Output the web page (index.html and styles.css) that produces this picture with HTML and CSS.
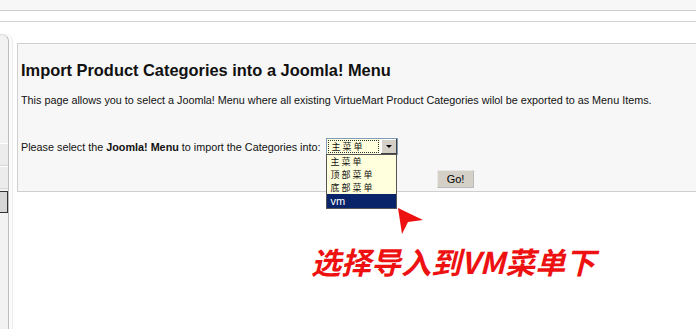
FILE: index.html
```html
<!DOCTYPE html>
<html>
<head>
    <title>Import Product Categories</title>
    <link rel="stylesheet" href="styles.css">
</head>
<body>
    <div class="topbar"></div>
    <div class="subbar"></div>

    <div class="layout">
        <div class="sidebar">
            <div class="side-gap"></div>
            <div class="side-item"></div>
            <div class="side-item"></div>
            <div class="side-item active"></div>
        </div>

        <div class="main">
            <div class="panel">
                <h1>Import Product Categories into a Joomla! Menu</h1>
                <p>This page allows you to select a Joomla! Menu where all existing VirtueMart Product Categories wilol be exported to as Menu Items.</p>

                <div class="select-row">
                    <span>Please select the <b>Joomla! Menu</b> to import the Categories into:</span>
                    <div class="fake-select">
                        <span class="fake-value">主菜单</span>
                        <span class="fake-btn"><span class="caret"></span></span>
                        <ul class="fake-list">
                            <li>主菜单</li>
                            <li>顶部菜单</li>
                            <li>底部菜单</li>
                            <li class="picked">vm</li>
                        </ul>
                    </div>
                </div>

                <div class="go-row">
                    <input type="button" class="go" value="Go!">
                </div>
            </div>

            <div class="note">选择导入到VM菜单下</div>
        </div>
    </div>

    <svg class="pointer" width="40" height="40" viewBox="0 0 40 40">
        <path d="M2 2 L27 14 L12 16 L6 28 Z" fill="#ee1111"/>
    </svg>
</body>
</html>
```

FILE: styles.css
```css
body {
    margin: 0;
    padding: 0;
    background: #fff;
    font-family: "Liberation Sans", Arial, sans-serif;
    font-size: 10.8px;
    color: #111;
    overflow: hidden;
    position: relative;
    height: 329px;
}

.topbar {
    height: 10px;
    background: #f7f7f7;
    border-bottom: 1px solid #cfcfcf;
}

.subbar {
    height: 10px;
    background: #fff;
    border-bottom: 1px solid #d4d4d4;
}

.layout {
    display: flex;
}

.sidebar {
    width: 8px;
    margin-top: 12px;
    height: 300px;
    background: #f2f2f2;
    border-right: 1px solid #bdbdbd;
    border-top: 1px solid #dcdcdc;
    border-top-right-radius: 7px;
    box-shadow: 3px 0 0 #fbfbfb, 4px 0 0 #ececec;
}

.side-gap {
    height: 108px;
}

.side-item {
    height: 21px;
    border-bottom: 1px solid #d8d8d8;
    border-top: 1px solid #fff;
    background: #ececec;
}

.side-item.active {
    margin-top: 2px;
    height: 20px;
    border: 1px solid #333;
    border-left: none;
    background: #d6d6d6;
}

.main {
    flex: 1;
    padding: 21px 0 0 8px;
}

.panel {
    background: #f7f7f7;
    border: 1px solid #cfcfcf;
    border-right: none;
    height: 147px;
    padding: 0 0 0 3px;
}

.panel h1 {
    margin: 17px 0 0;
    font-size: 16.4px;
    font-weight: bold;
    color: #111;
}

.panel p {
    margin: 14px 0 0;
}

.select-row {
    display: flex;
    align-items: center;
    margin-top: 32px;
}

.select-row b {
    font-weight: bold;
}

.fake-select {
    position: relative;
    display: flex;
    margin-left: 6px;
    height: 15px;
    width: 70px;
    border: 1px solid #7f9db9;
    background: #ffffdd;
}

.fake-value {
    flex: 1;
    outline: 1px dotted #333;
    outline-offset: -2px;
    padding-left: 4px;
    font-family: "Noto Sans CJK SC", sans-serif;
    font-size: 9px;
    letter-spacing: 2px;
    line-height: 15px;
    overflow: hidden;
}

.fake-btn {
    width: 16px;
    background: #d4d0c8;
    border-left: 1px solid #fff;
    box-shadow: inset -1px -1px 0 #404040, inset 1px 1px 0 #fff;
    display: flex;
    align-items: center;
    justify-content: center;
}

.caret {
    width: 0;
    height: 0;
    border-left: 3px solid transparent;
    border-right: 3px solid transparent;
    border-top: 3px solid #000;
}

.fake-list {
    position: absolute;
    top: 15px;
    left: -1px;
    width: 69px;
    margin: 0;
    padding: 0;
    list-style: none;
    background: #ffffdd;
    border: 1px solid #555;
    font-family: "Noto Sans CJK SC", sans-serif;
    font-size: 9px;
    letter-spacing: 2px;
}

.fake-list li {
    height: 13px;
    line-height: 13px;
    padding-left: 3px;
    overflow: hidden;
}

.fake-list li.picked {
    height: 14px;
    line-height: 14px;
    background: #0a246a;
    color: #fff;
    font-family: "Liberation Sans", Arial, sans-serif;
    font-size: 11px;
    letter-spacing: 0;
}

.go-row {
    padding-left: 416px;
    margin-top: 15px;
}

.go {
    width: 37px;
    height: 18px;
    padding: 0;
    font-family: "Liberation Sans", Arial, sans-serif;
    font-size: 11px;
    background: #d4d0c8;
    border: 1px solid #e8e8e8;
    border-right-color: #bbb;
    border-bottom-color: #bbb;
}

.note {
    margin: 49px 0 0 294px;
    font-family: "Noto Sans CJK SC", sans-serif;
    font-size: 30px;
    font-weight: bold;
    font-style: italic;
    color: #ee1111;
    line-height: 40px;
}

.pointer {
    position: absolute;
    left: 396px;
    top: 206px;
}
```
